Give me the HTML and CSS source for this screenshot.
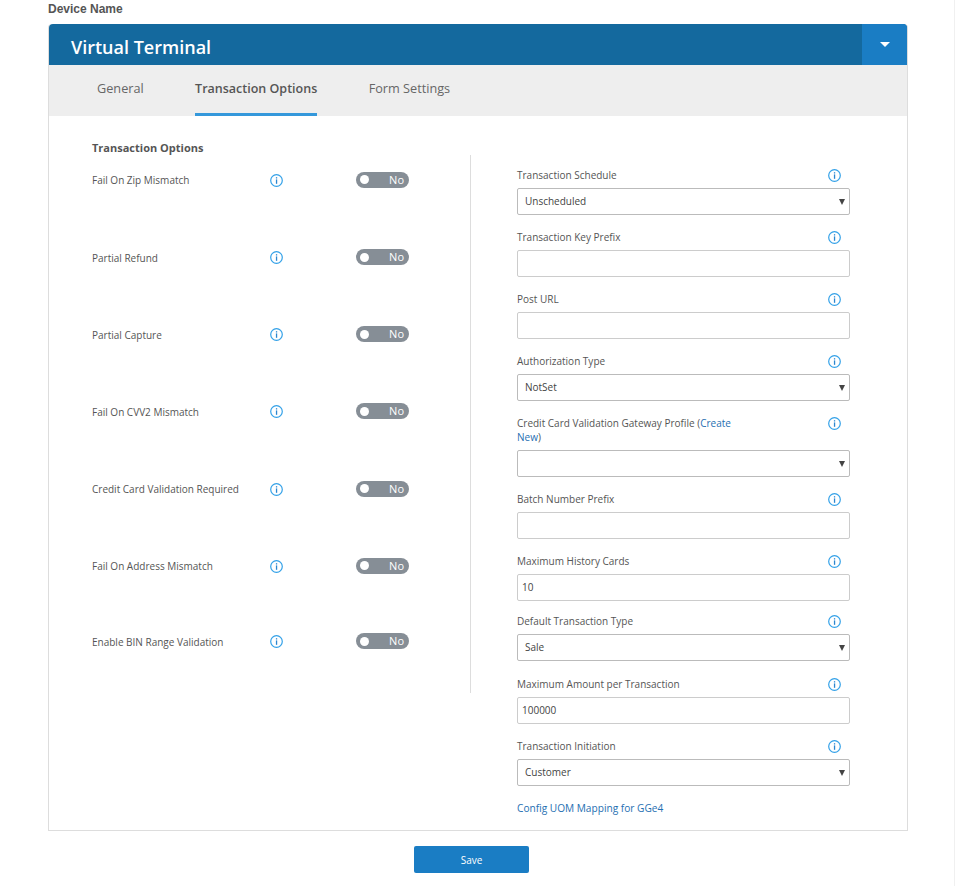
FILE: index.html
```html
<!DOCTYPE html>
<html lang="en">
<head>
    <meta charset="UTF-8">
    <meta name="viewport" content="width=device-width, initial-scale=1.0">
    <title>Virtual Terminal</title>
    <link rel="stylesheet" href="styles.css">
</head>
<body>

<svg class="icon-defs" width="0" height="0">
    <symbol id="info" viewBox="0 0 13 13">
        <circle cx="6.5" cy="6.5" r="5.8" fill="none" stroke="#33a1e8" stroke-width="1.2"/>
        <rect x="5.9" y="5.4" width="1.3" height="4.4" fill="#2a86d0"/>
        <rect x="5.9" y="3.2" width="1.3" height="1.3" fill="#2a86d0"/>
    </symbol>
</svg>

<div class="page">
    <div class="device-name">Device Name</div>

    <div class="card">
        <div class="card-header">
            <h1>Virtual Terminal</h1>
            <button class="header-menu" type="button"><span class="caret"></span></button>
        </div>

        <div class="tabs">
            <a class="tab">General</a>
            <a class="tab active">Transaction Options</a>
            <a class="tab">Form Settings</a>
        </div>

        <div class="card-body">
            <div class="col-left">
                <h2>Transaction Options</h2>
                <div class="toggle-list">
                    <div class="toggle-row">
                        <span class="toggle-label">Fail On Zip Mismatch</span>
                        <svg class="info"><use href="#info"/></svg>
                        <span class="toggle"><i></i>No</span>
                    </div>
                    <div class="toggle-row">
                        <span class="toggle-label">Partial Refund</span>
                        <svg class="info"><use href="#info"/></svg>
                        <span class="toggle"><i></i>No</span>
                    </div>
                    <div class="toggle-row">
                        <span class="toggle-label">Partial Capture</span>
                        <svg class="info"><use href="#info"/></svg>
                        <span class="toggle"><i></i>No</span>
                    </div>
                    <div class="toggle-row">
                        <span class="toggle-label">Fail On CVV2 Mismatch</span>
                        <svg class="info"><use href="#info"/></svg>
                        <span class="toggle"><i></i>No</span>
                    </div>
                    <div class="toggle-row">
                        <span class="toggle-label">Credit Card Validation Required</span>
                        <svg class="info"><use href="#info"/></svg>
                        <span class="toggle"><i></i>No</span>
                    </div>
                    <div class="toggle-row">
                        <span class="toggle-label">Fail On Address Mismatch</span>
                        <svg class="info"><use href="#info"/></svg>
                        <span class="toggle"><i></i>No</span>
                    </div>
                    <div class="toggle-row toggle-row-last">
                        <span class="toggle-label">Enable BIN Range Validation</span>
                        <svg class="info"><use href="#info"/></svg>
                        <span class="toggle"><i></i>No</span>
                    </div>
                </div>
            </div>

            <div class="col-right">
                <div class="field">
                    <div class="field-label"><label>Transaction Schedule</label><svg class="info"><use href="#info"/></svg></div>
                    <div class="select-box"><select><option>Unscheduled</option></select></div>
                </div>
                <div class="field">
                    <div class="field-label"><label>Transaction Key Prefix</label><svg class="info"><use href="#info"/></svg></div>
                    <input type="text">
                </div>
                <div class="field">
                    <div class="field-label"><label>Post URL</label><svg class="info"><use href="#info"/></svg></div>
                    <input type="text">
                </div>
                <div class="field">
                    <div class="field-label"><label>Authorization Type</label><svg class="info"><use href="#info"/></svg></div>
                    <div class="select-box"><select><option>NotSet</option></select></div>
                </div>
                <div class="field">
                    <div class="field-label"><label>Credit Card Validation Gateway Profile (<a>Create</a><br><a>New</a>)</label><svg class="info"><use href="#info"/></svg></div>
                    <div class="select-box"><select><option></option></select></div>
                </div>
                <div class="field">
                    <div class="field-label"><label>Batch Number Prefix</label><svg class="info"><use href="#info"/></svg></div>
                    <input type="text">
                </div>
                <div class="field field-short">
                    <div class="field-label"><label>Maximum History Cards</label><svg class="info"><use href="#info"/></svg></div>
                    <input type="text" value="10">
                </div>
                <div class="field field-long">
                    <div class="field-label"><label>Default Transaction Type</label><svg class="info"><use href="#info"/></svg></div>
                    <div class="select-box"><select><option>Sale</option></select></div>
                </div>
                <div class="field">
                    <div class="field-label"><label>Maximum Amount per Transaction</label><svg class="info"><use href="#info"/></svg></div>
                    <input type="text" value="100000">
                </div>
                <div class="field">
                    <div class="field-label"><label>Transaction Initiation</label><svg class="info"><use href="#info"/></svg></div>
                    <div class="select-box"><select><option>Customer</option></select></div>
                </div>
                <a class="config-link">Config UOM Mapping for GGe4</a>
            </div>
        </div>
    </div>

    <div class="actions">
        <button class="save-btn" type="button">Save</button>
    </div>
</div>

</body>
</html>
```

FILE: styles.css
```css
* {
    box-sizing: border-box;
    margin: 0;
    padding: 0;
}
body {
    font-family: 'Open Sans', sans-serif;
    font-size: 10px;
    color: #555;
    background-color: #fff;
}
.icon-defs {
    display: block;
    height: 0;
}
.page {
    width: 955px;
    height: 886px;
    padding: 0 46px 0 48px;
    border-right: 1px solid #f0f0f0;
}
.device-name {
    font-family: 'Liberation Sans', sans-serif;
    font-size: 12px;
    font-weight: bold;
    line-height: 18px;
    height: 24px;
    color: #555;
}
.card {
    height: 807px;
    border: 1px solid #ddd;
    border-top: none;
    border-radius: 4px 4px 0 0;
}
.card-header {
    display: flex;
    justify-content: space-between;
    height: 41px;
    background-color: #14699e;
    border-radius: 4px 4px 0 0;
    overflow: hidden;
}
.card-header h1 {
    font-size: 18px;
    font-weight: 600;
    line-height: 46px;
    color: #fff;
    padding-left: 22px;
}
.header-menu {
    width: 45px;
    border: none;
    background-color: #1a7dc4;
    display: flex;
    align-items: center;
    justify-content: center;
}
.caret {
    width: 0;
    height: 0;
    border-left: 5px solid transparent;
    border-right: 5px solid transparent;
    border-top: 5px solid #fff;
}
.tabs {
    display: flex;
    gap: 51.4px;
    height: 51px;
    padding-left: 48px;
    background-color: #eee;
}
.tab {
    font-size: 12.7px;
    line-height: 47px;
    color: #666;
}
.tab.active {
    font-size: 12.5px;
    font-weight: 600;
    color: #555;
    border-bottom: 3px solid #3498db;
}
.card-body {
    display: flex;
}
.col-left {
    width: 379px;
    margin: 23px 46px 0 43px;
    flex: none;
}
.col-left h2 {
    font-size: 11px;
    font-weight: 700;
    line-height: 17px;
    height: 16px;
    color: #555;
}
.toggle-list {
    height: 538px;
    border-right: 1px solid #ddd;
}
.toggle-row {
    display: flex;
    align-items: center;
    height: 77.2px;
    padding-bottom: 26.4px;
}
.toggle-row-last {
    margin-top: -2px;
}
.toggle-label {
    width: 178px;
    font-size: 10px;
}
.toggle {
    display: flex;
    align-items: center;
    justify-content: space-between;
    width: 53px;
    height: 16px;
    margin: -1px 0 0 73px;
    padding: 0 5px 1px 4px;
    border-radius: 8px;
    background-color: #868e96;
    color: #fff;
    font-size: 11px;
}
.toggle i {
    width: 9px;
    height: 9px;
    margin-top: 1px;
    border-radius: 50%;
    background-color: #fff;
}
.info {
    width: 13px;
    height: 13px;
    flex: none;
}
.col-right {
    width: 333px;
    padding-top: 52px;
    flex: none;
}
.field {
    margin-bottom: 15px;
}
.field-short {
    margin-bottom: 13px;
}
.field-long {
    margin-bottom: 16px;
}
.field-label {
    display: flex;
    justify-content: space-between;
    align-items: flex-start;
    min-height: 20px;
    padding: 0 9px 6px 0;
    line-height: 14px;
}
.field-label label {
    font-size: 10px;
    color: #555;
    display: block;
}
.field-label a {
    color: #1f6fb2;
}
.field-label .info {
    margin-top: 1px;
}
input[type="text"], select {
    display: block;
    width: 100%;
    height: 27px;
    padding: 0 7px 1px;
    font-family: 'Open Sans', sans-serif;
    font-size: 10px;
    color: #444;
    background-color: #fff;
    border: 1px solid #ccc;
    border-radius: 2px;
    appearance: none;
}
input[type="text"] {
    padding: 0 4px 1px;
}
select {
    border-color: #bbb;
}
.select-box {
    position: relative;
}
.select-box::after {
    content: "";
    position: absolute;
    right: 5px;
    top: 11px;
    border-left: 3.5px solid transparent;
    border-right: 3.5px solid transparent;
    border-top: 6px solid #444;
}
.config-link {
    display: block;
    margin-top: 2px;
    font-size: 10.15px;
    line-height: 14px;
    color: #1f6fb2;
}
.actions {
    display: flex;
    justify-content: center;
    padding: 15px 13px 0 0;
}
.save-btn {
    width: 115px;
    height: 27px;
    border: none;
    border-radius: 2px;
    background-color: #1a7dc4;
    color: #fff;
    font-family: 'Open Sans', sans-serif;
    font-size: 10px;
}
```
